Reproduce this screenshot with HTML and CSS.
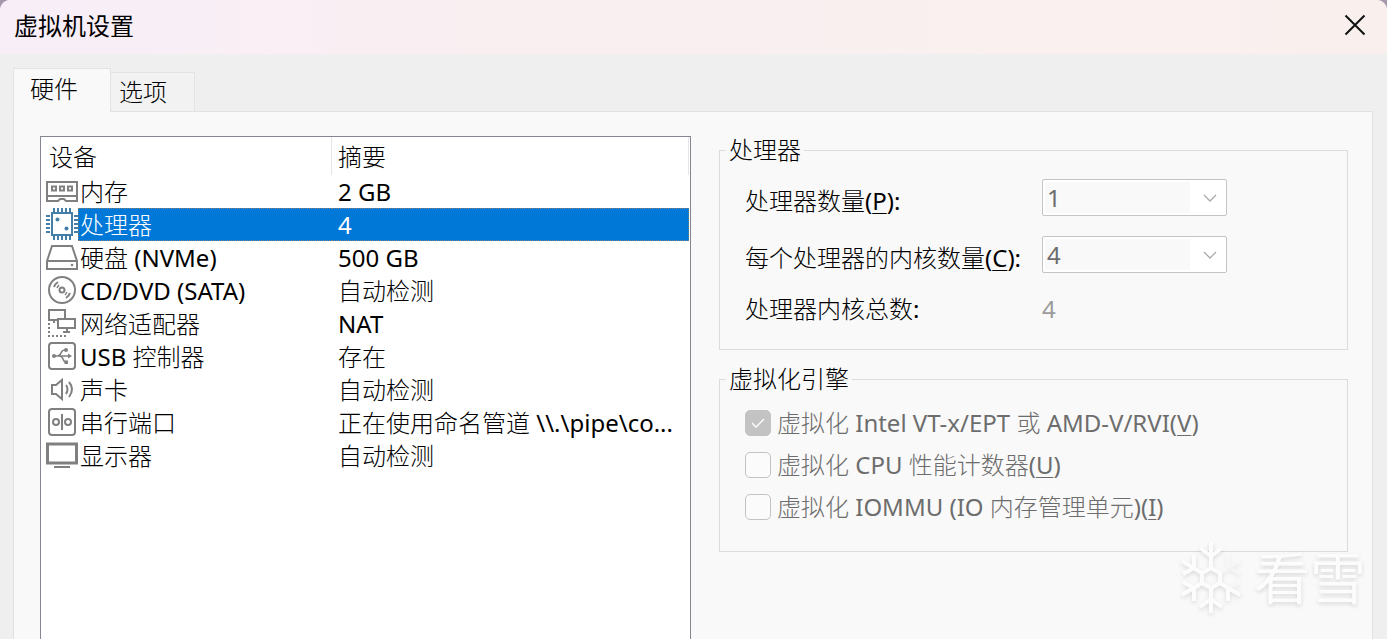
FILE: index.html
```
<!DOCTYPE html>
<html lang="zh-CN">
<head>
    <meta charset="UTF-8">
    <meta name="viewport" content="width=device-width, initial-scale=1.0">
    <title>虚拟机设置</title>
    <link rel="stylesheet" href="styles.css">
</head>
<body>

<div class="window">
    <header class="titlebar">
        <h1>虚拟机设置</h1>
        <button class="close" type="button" aria-label="关闭">
            <svg width="22" height="22" viewBox="0 0 22 22"><path d="M1.5 1.5l19 19M20.5 1.5l-19 19"/></svg>
        </button>
    </header>

    <nav class="tabs">
        <button class="tab active" type="button">硬件</button>
        <button class="tab" type="button">选项</button>
    </nav>

    <main class="panel">
        <div class="device-list">
            <table>
                <colgroup>
                    <col class="col-icon">
                    <col class="col-name">
                    <col>
                </colgroup>
                <thead>
                    <tr><th colspan="2">设备</th><th class="summary">摘要</th></tr>
                </thead>
                <tbody>
                    <tr>
                        <td class="icon"><svg viewBox="0 0 32 33"><path d="M1 7h30v19H20l-2-2h-4l-2 2H1zM1 21h30"/><path d="M6 11.5h4v4H6zM14 11.5h4v4h-4zM22 11.5h4v4h-4z"/></svg></td>
                        <td>内存</td><td class="summary">2 GB</td>
                    </tr>
                    <tr class="selected">
                        <td class="icon"><svg viewBox="0 0 32 33"><path d="M6 5h20v22H6z"/><path d="M8 0v4M12 0v4M16 0v4M20 0v4M24 0v4M8 28v4M12 28v4M16 28v4M20 28v4M24 28v4M0 8h4M0 12h4M0 16h4M0 20h4M0 24h4M28 8h4M28 12h4M28 16h4M28 20h4M28 24h4"/><circle class="dot" cx="11.5" cy="11.5" r="2"/><circle class="dot" cx="20.5" cy="20.5" r="2"/></svg></td>
                        <td class="name">处理器</td><td class="summary">4</td>
                    </tr>
                    <tr>
                        <td class="icon"><svg viewBox="0 0 32 33"><path d="M1 20L6 5h20l5 15v8H1zM1 20h30"/><circle class="dot" cx="26" cy="24" r="1.3"/></svg></td>
                        <td>硬盘 (NVMe)</td><td class="summary">500 GB</td>
                    </tr>
                    <tr>
                        <td class="icon"><svg viewBox="0 0 32 33"><circle cx="16" cy="16" r="13"/><circle cx="16" cy="16" r="2.5"/><path d="M8 13q1-3 4-5M24 19q-1 3-4 5"/><path class="thin" d="M11 14q1-2 2-3M21 18q-1 2-2 3"/></svg></td>
                        <td>CD/DVD (SATA)</td><td class="summary">自动检测</td>
                    </tr>
                    <tr>
                        <td class="icon"><svg viewBox="0 0 32 33"><path d="M12 13H3V3h16v8M8 13v3M12 12h17v9H12zM21 21v4M17 25h7"/><path class="dotted" d="M3 16v13h18"/></svg></td>
                        <td>网络适配器</td><td class="summary">NAT</td>
                    </tr>
                    <tr>
                        <td class="icon"><svg viewBox="0 0 32 33"><rect x="3" y="3" width="26" height="26" rx="3"/><path class="thin" d="M8 16h15M11 16q3 0 4-3t4-3M13 16q3 0 4 3t3 3"/><circle class="dot" cx="8" cy="16" r="2"/><circle class="dot" cx="20" cy="10" r="2"/><path class="dot" d="M22 13.5l4 2.5-4 2.5zM18.500 20.500h3.500v3.500h-3.500z"/></svg></td>
                        <td>USB 控制器</td><td class="summary">存在</td>
                    </tr>
                    <tr>
                        <td class="icon"><svg viewBox="0 0 32 33"><path d="M6 12h4l6-5v19l-6-5H6z"/><path d="M20 12q3 4 0 9M23 9q6 7 0 15"/></svg></td>
                        <td>声卡</td><td class="summary">自动检测</td>
                    </tr>
                    <tr>
                        <td class="icon"><svg viewBox="0 0 32 33"><rect x="3" y="3" width="26" height="26" rx="3"/><circle cx="10" cy="16" r="3"/><circle cx="22" cy="16" r="3"/><path d="M16 8v16"/></svg></td>
                        <td>串行端口</td><td class="summary">正在使用命名管道 \\.\pipe\co...</td>
                    </tr>
                    <tr>
                        <td class="icon"><svg viewBox="0 0 32 33"><path class="thick" d="M1.500 5h29v19h-29z"/><path d="M8 28h16"/></svg></td>
                        <td>显示器</td><td class="summary">自动检测</td>
                    </tr>
                </tbody>
            </table>
        </div>

        <div class="settings">
            <fieldset>
                <legend>处理器</legend>
                <div class="fields">
                    <label for="cpus">处理器数量(<u>P</u>):</label>
                    <select id="cpus" disabled><option>1</option></select>
                    <label for="cores">每个处理器的内核数量(<u>C</u>):</label>
                    <select id="cores" disabled><option>4</option></select>
                    <span>处理器内核总数:</span>
                    <output for="cpus cores">4</output>
                </div>
            </fieldset>

            <fieldset>
                <legend>虚拟化引擎</legend>
                <div class="checks">
                    <label><input type="checkbox" checked disabled>虚拟化 Intel VT-x/EPT 或 AMD-V/RVI(<u>V</u>)</label>
                    <label><input type="checkbox" disabled>虚拟化 CPU 性能计数器(<u>U</u>)</label>
                    <label><input type="checkbox" disabled>虚拟化 IOMMU (IO 内存管理单元)(<u>I</u>)</label>
                </div>
            </fieldset>
        </div>
    </main>

    <div class="watermark">
        <svg width="68" height="74" viewBox="0 0 68 74">
            <path d="M34 27l9 5v10l-9 5-9-5V32z"/>
            <path d="M34 27V1M34 47v25M25 32L5 20M25 42L5 54M43 42l20 12"/>
            <path d="M23 7l11 8 11-8M23 66l11-8 11 8M17 14v13L6 33M17 60V47L6 41M51 60V47"/>
            <path class="faint" d="M43 32l20-12M51 14v12l12 7M63 41l-12 6"/>
        </svg>
        <span>看雪</span>
    </div>
</div>

</body>
</html>
```

FILE: styles.css
```
* {
    box-sizing: border-box;
}

body {
    margin: 0;
    background: #a797ad;
    color: #000;
    font-family: "Noto Sans", "Noto Sans CJK SC Light", "Noto Sans CJK SC", sans-serif;
    font-size: 24px;
    line-height: 32px;
}

button,
select {
    font: inherit;
    color: inherit;
}

.window {
    position: relative;
    display: flex;
    flex-direction: column;
    height: 100vh;
    overflow: hidden;
    background: #efefef;
    border-radius: 10px 10px 0 0;
}

.titlebar {
    display: flex;
    align-items: center;
    justify-content: space-between;
    height: 54px;
    padding: 0 21px 4px 14px;
    background: linear-gradient(to right, #f8eef8, #f9eff1 35%, #f9f0ee);
}

.titlebar h1 {
    margin: 0;
    font-family: "Noto Sans CJK SC", sans-serif;
    font-size: 24px;
    font-weight: 400;
}

.close {
    display: flex;
    padding: 0;
    border: 0;
    background: none;
}

.close svg {
    fill: none;
    stroke: #111;
    stroke-width: 2;
}

.tabs {
    display: flex;
    align-items: flex-end;
    padding: 14px 13px 0;
}

.tab {
    height: 39px;
    padding: 3px 27px 3px 8px;
    border: 1px solid #e3e3e3;
    border-width: 1px 1px 0 0;
    background: #f2f2f2;
}

.tab.active {
    z-index: 1;
    height: 44px;
    margin-bottom: -1px;
    padding: 3px 32px 6px 16px;
    border-width: 1px 1px 0 1px;
    background: #f9f9f9;
}

.panel {
    flex: 1;
    display: grid;
    grid-template-columns: 1.035fr 1fr;
    gap: 28px;
    min-height: 0;
    margin: 0 14px 0 13px;
    padding: 24px 24px 0 26px;
    border: 1px solid #e1e1e1;
    border-bottom: 0;
    background: #f9f9f9;
}

.device-list {
    border: 1px solid #828790;
    border-bottom: 0;
    background: #fff;
    padding-right: 1px;
}

table {
    width: 100%;
    border-collapse: separate;
    border-spacing: 0;
    table-layout: fixed;
}

.col-icon {
    width: 37px;
}

.col-name {
    width: 254px;
}

th {
    height: 38px;
    padding: 2px 0 0 8px;
    border-right: 1px solid #e5e5e5;
    font-weight: 400;
    text-align: left;
}

td {
    height: 33px;
    padding: 0 0 0 2px;
    line-height: 33px;
    white-space: nowrap;
}

.icon {
    padding-left: 5px;
}

.summary {
    padding-left: 6px;
}

.icon svg {
    display: block;
    width: 32px;
    height: 33px;
    fill: none;
    stroke: #808080;
    stroke-width: 2;
}

.icon .thin {
    stroke-width: 1.5;
}

.icon .thick {
    stroke-width: 3;
}

.icon .dot {
    fill: #808080;
    stroke: none;
}

.icon .dotted {
    stroke-dasharray: 2 2;
}

.selected .icon svg {
    stroke: #447fa9;
}

.selected .icon .dot {
    fill: #447fa9;
}

.selected .name,
.selected .summary {
    background: #0078d7;
    border: 0 dotted #7d8078;
    border-width: 1px 0;
    color: #fff;
    line-height: 31px;
}

.selected .name {
    border-left-width: 1px;
    padding-left: 1px;
}

.selected .summary {
    border-right-width: 1px;
}

fieldset {
    min-width: 0;
    margin: 0;
    padding: 0 25px;
    border: 1px solid #dcdcdc;
}

legend {
    margin-left: -19px;
    padding: 0 3px;
    line-height: 24px;
}

.settings {
    display: flex;
    flex-direction: column;
    gap: 17px;
    padding-top: 2px;
}

.fields {
    display: grid;
    grid-template-columns: 297px 185px;
    row-gap: 20px;
    align-items: center;
    padding: 17px 0 24px;
}

.fields label {
    padding-top: 7px;
    line-height: 30px;
    white-space: nowrap;
}

.fields output {
    color: #9b9b9b;
}

u {
    text-decoration-thickness: 1px;
    text-underline-offset: 3px;
}

select {
    height: 37px;
    padding: 0 4px;
    border: 1px solid #c4c4c4;
    border-radius: 2px;
    appearance: none;
    color: #6d6d6d;
    opacity: 1;
    background:
        url("data:image/svg+xml,%3Csvg xmlns='http://www.w3.org/2000/svg' width='14' height='8'%3E%3Cpath d='M1 1l6 6 6-6' fill='none' stroke='%23aaa' stroke-width='1.3'/%3E%3C/svg%3E") no-repeat right 9px center,
        linear-gradient(#f9f9f9, #f9f9f9) no-repeat 2px 2px / 145px 31px,
        #fff;
}

.checks {
    display: flex;
    flex-direction: column;
    gap: 10px;
    padding: 16px 0 28px;
    color: #6d6d6d;
}

.checks label {
    display: flex;
    align-items: center;
    white-space: pre;
}

.checks input {
    width: 26px;
    height: 26px;
    margin: 0 6px 0 0;
    border: 1px solid #c3c3c3;
    border-radius: 5px;
    appearance: none;
    background: #fbfbfb;
}

.checks input:checked {
    background: #c3c3c3 url("data:image/svg+xml,%3Csvg xmlns='http://www.w3.org/2000/svg' width='14' height='10'%3E%3Cpath d='M1 5l4 4 8-8' fill='none' stroke='white' stroke-width='1.3'/%3E%3C/svg%3E") no-repeat center;
}

/* floats over the bottom right corner */
.watermark {
    position: absolute;
    right: 21px;
    bottom: 24px;
    display: flex;
    align-items: flex-start;
    gap: 9px;
    color: #fcfcfc;
    font-family: "Noto Sans CJK SC", sans-serif;
    font-size: 56px;
    line-height: 68px;
    text-shadow: 0 2px 4px rgba(0, 0, 0, 0.14);
    pointer-events: none;
}

.watermark svg {
    fill: none;
    stroke: #fcfcfc;
    stroke-width: 4;
    filter: drop-shadow(0 2px 2px rgba(0, 0, 0, 0.12));
}

.watermark .faint {
    opacity: 0.5;
}
```
